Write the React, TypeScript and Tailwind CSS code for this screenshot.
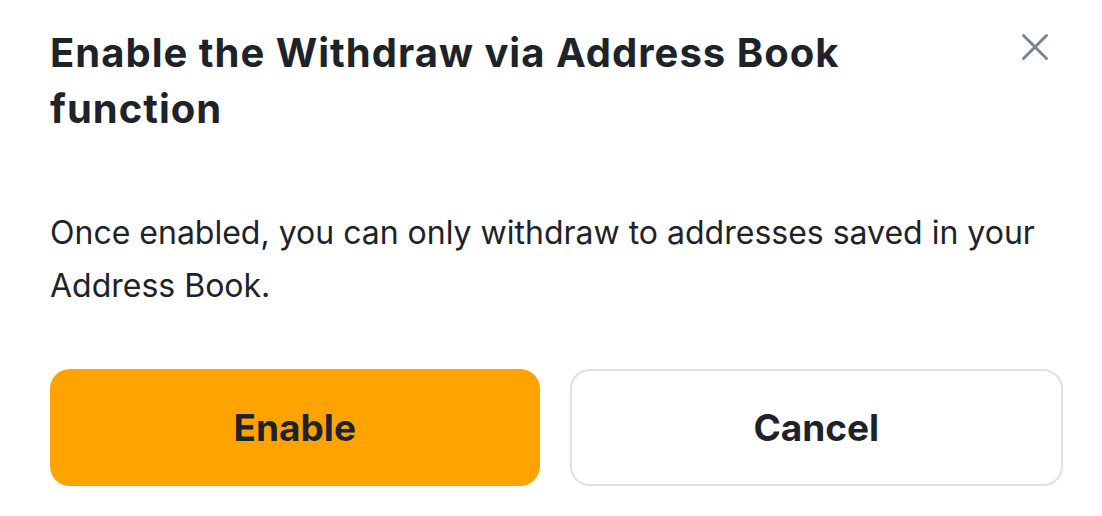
import React from "react";

export default function App() {
  return (
    <div className="w-[1102px] h-[516px] bg-white text-[#1e2329] overflow-hidden" style={{ fontFamily: "Inter, 'Noto Sans', sans-serif" }}>
      <div className="pl-[50px] pr-[39px] pt-[25px]">
        <div className="flex items-start justify-between">
          <h1 className="text-[40px] leading-[56px] font-bold tracking-[1px] max-w-[870px]">
            Enable the Withdraw via Address Book function
          </h1>
          <button className="mt-[2px] mr-[8px] w-[40px] h-[40px] flex items-center justify-center text-[#7d8592]">
            <svg width="40" height="40" viewBox="0 0 40 40" fill="none" stroke="currentColor" strokeWidth="3" strokeLinecap="round">
              <path d="M8.5 8.5L31.5 31.5M31.5 8.5L8.5 31.5" />
            </svg>
          </button>
        </div>
        <p className="mt-[69px] text-[32px] leading-[53px] pr-[20px]">
          Once enabled, you can only withdraw to addresses saved in your Address Book.
        </p>
        <div className="mt-[57px] flex gap-[30px]">
          <button className="flex-1 h-[117px] rounded-[20px] bg-[#ffa300] text-[37px] font-bold">Enable</button>
          <button className="flex-1 h-[117px] rounded-[20px] border-2 border-[#dde1e7] bg-white text-[37px] font-bold">Cancel</button>
        </div>
      </div>
    </div>
  );
}
